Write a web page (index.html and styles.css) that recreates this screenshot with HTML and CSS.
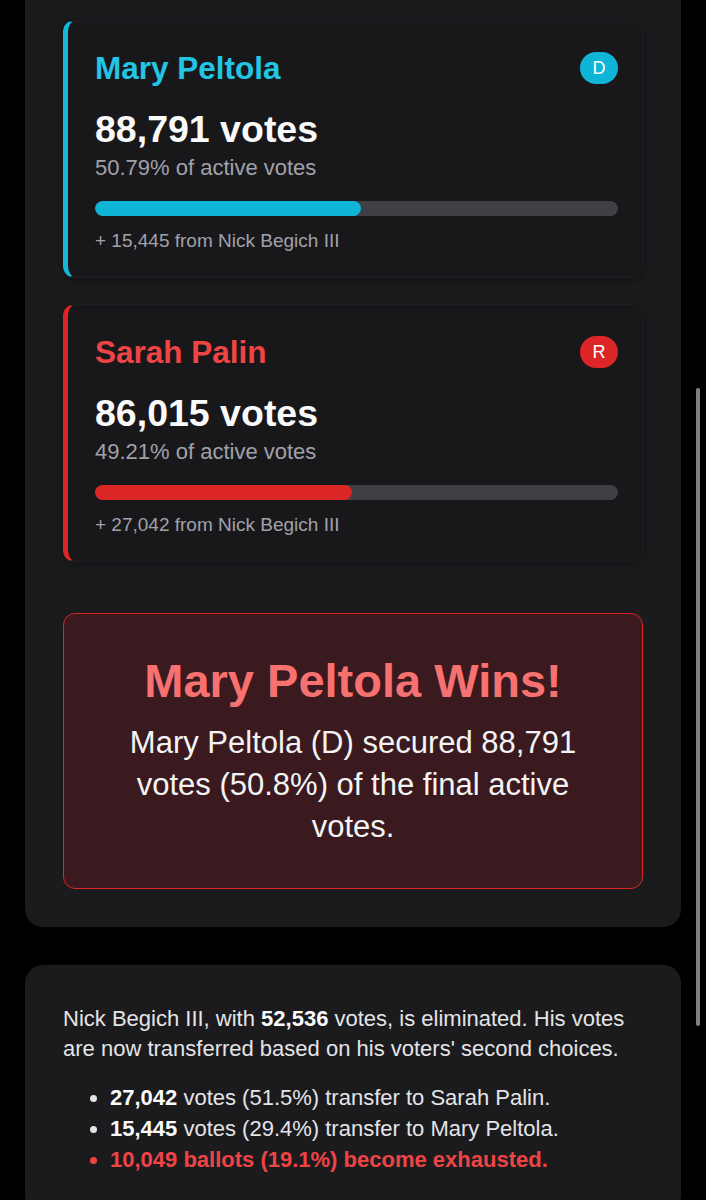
FILE: index.html
```html
<!DOCTYPE html>
<html lang="en">
<head>
<meta charset="UTF-8">
<meta name="viewport" content="width=device-width, initial-scale=1.0">
<title>Alaska Special Election - Round 2</title>
<link rel="stylesheet" href="styles.css">
</head>
<body>

<div class="page">
    <section class="panel panel-top">
        <div class="card dem">
            <div class="card-head">
                <h3 class="name">Mary Peltola</h3>
                <span class="badge">D</span>
            </div>
            <div class="votes">88,791 votes</div>
            <div class="pct">50.79% of active votes</div>
            <div class="bar"><div class="fill" style="width: 50.79%"></div></div>
            <div class="transfer">+ 15,445 from Nick Begich III</div>
        </div>

        <div class="card rep">
            <div class="card-head">
                <h3 class="name">Sarah Palin</h3>
                <span class="badge">R</span>
            </div>
            <div class="votes">86,015 votes</div>
            <div class="pct">49.21% of active votes</div>
            <div class="bar"><div class="fill" style="width: 49.21%"></div></div>
            <div class="transfer">+ 27,042 from Nick Begich III</div>
        </div>

        <div class="winner">
            <h2>Mary Peltola Wins!</h2>
            <p>Mary Peltola (D) secured 88,791 votes (50.8%) of the final active votes.</p>
        </div>
    </section>

    <section class="panel">
        <p class="summary">Nick Begich III, with <b>52,536</b> votes, is eliminated. His votes are now transferred based on his voters' second choices.</p>
        <ul class="moves">
            <li><b>27,042</b> votes (51.5%) transfer to Sarah Palin.</li>
            <li><b>15,445</b> votes (29.4%) transfer to Mary Peltola.</li>
            <li class="lost">10,049 ballots (19.1%) become exhausted.</li>
        </ul>
    </section>
</div>

<div class="scrollbar"></div>

</body>
</html>
```

FILE: styles.css
```css
body {
    font-family: "Liberation Sans", Arial, sans-serif;
    background-color: #000;
    color: #e4e4e7;
    margin: 0;
}
.page {
    padding: 0 25px;
}
.panel {
    background: #1b1b1e;
    border-radius: 18px;
    padding: 39px 38px 38px;
    margin-bottom: 38px;
}
.panel-top {
    border-radius: 0 0 18px 18px;
    padding-top: 20px;
}
.card {
    background: #18181b;
    border: 1px solid #1f1f23;
    border-left: 5px solid;
    border-radius: 12px;
    box-shadow: 0 2px 8px rgba(0, 0, 0, 0.35);
    padding: 29px 24px 24px 27px;
    margin-bottom: 26px;
}
.card.dem {
    border-left-color: #14b8d8;
}
.card.rep {
    border-left-color: #dc2626;
}
.card-head {
    display: flex;
    justify-content: space-between;
    align-items: center;
    height: 36px;
}
.name {
    margin: 0;
    font-size: 31.5px;
    line-height: 36px;
    font-weight: bold;
}
.dem .name {
    color: #22c5e4;
}
.rep .name {
    color: #ef4444;
}
.badge {
    width: 38px;
    height: 32px;
    border-radius: 16px;
    display: flex;
    justify-content: center;
    align-items: center;
    font-size: 18px;
    color: #fff;
}
.dem .badge {
    background: #0fb5d6;
}
.rep .badge {
    background: #dc2626;
}
.votes {
    margin-top: 21px;
    font-size: 37.5px;
    line-height: 44px;
    font-weight: bold;
    color: #fafafa;
}
.pct {
    margin-top: 3px;
    font-size: 22px;
    line-height: 28px;
    color: #a1a1aa;
}
.bar {
    margin-top: 19px;
    height: 15px;
    border-radius: 8px;
    background: #3f3f46;
    overflow: hidden;
}
.fill {
    height: 100%;
    border-radius: 8px;
}
.dem .fill {
    background: #0fb5d6;
}
.rep .fill {
    background: #dc2626;
}
.transfer {
    margin-top: 13px;
    font-size: 19px;
    line-height: 24px;
    color: #a1a1aa;
}
.winner {
    margin-top: 51px;
    background: #3a1a1e;
    border: 1.5px solid #dc2626;
    border-radius: 12px;
    padding: 40px 36px 40px;
    text-align: center;
}
.winner h2 {
    margin: 0;
    font-size: 47px;
    line-height: 54px;
    color: #f87171;
}
.winner p {
    margin: 14px 0 0;
    font-size: 31px;
    line-height: 42px;
    color: #f4f4f5;
}
.summary {
    margin: 0;
    font-size: 22px;
    line-height: 30px;
    color: #e4e4e7;
}
.moves {
    margin: 18px 0 0;
    padding-left: 47px;
    font-size: 22px;
    line-height: 31px;
}
b {
    color: #fafafa;
}
.lost {
    color: #ef4444;
    font-weight: bold;
}
.scrollbar {
    position: fixed;
    right: 6px;
    top: 388px;
    width: 4px;
    height: 638px;
    border-radius: 2px;
    background: #808080;
}
```
